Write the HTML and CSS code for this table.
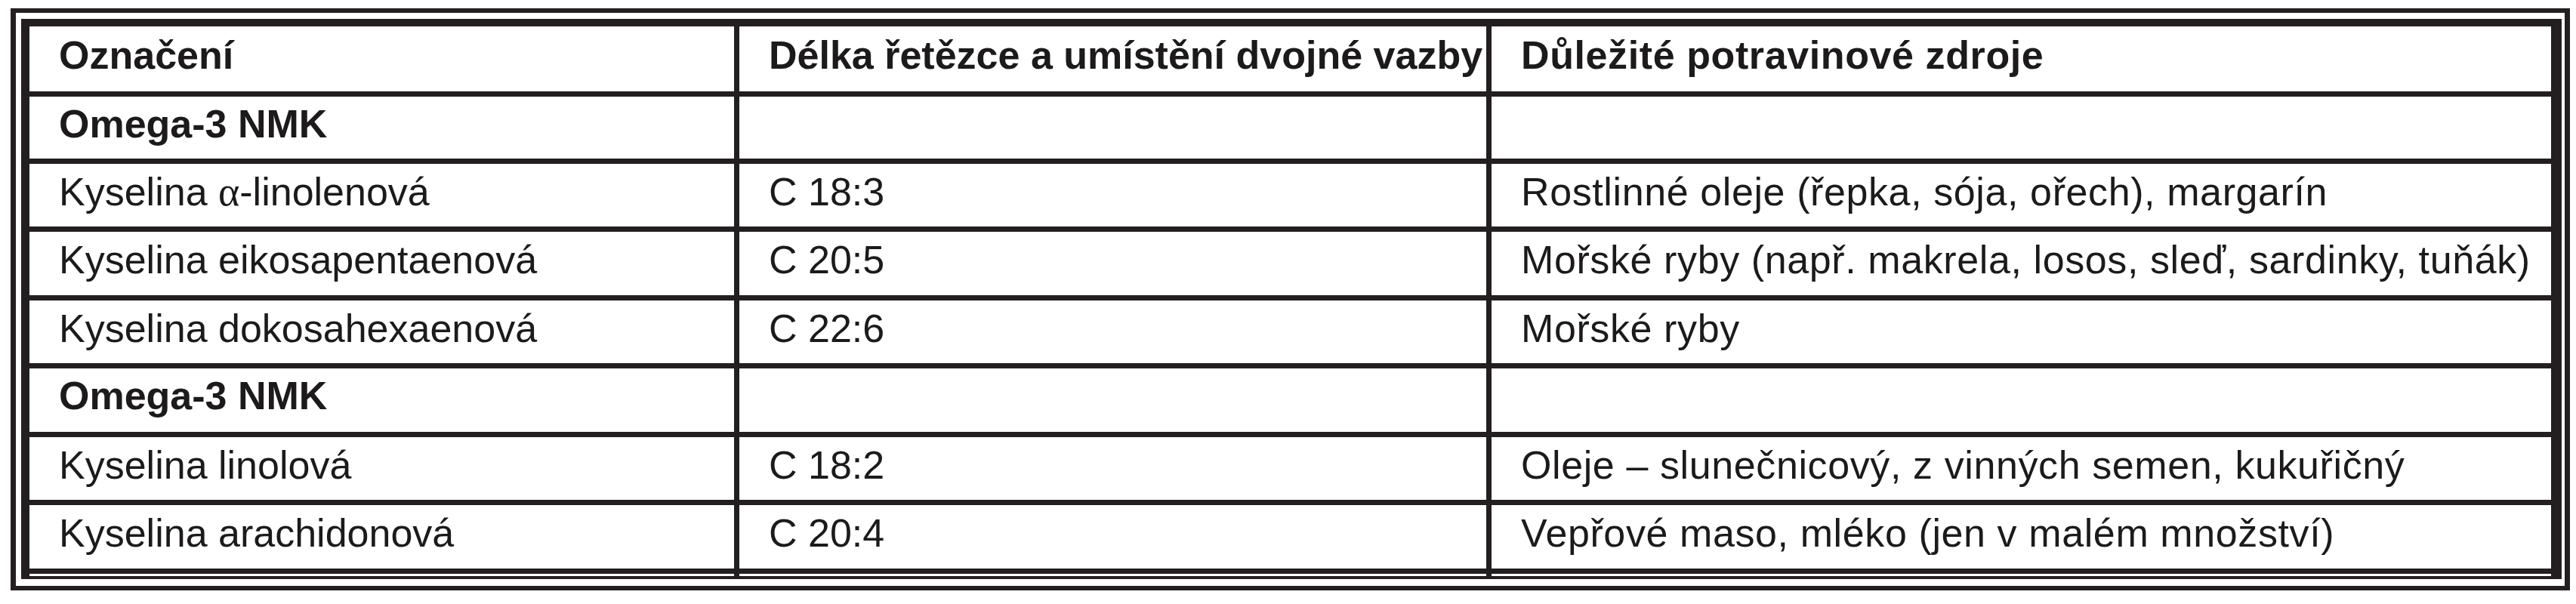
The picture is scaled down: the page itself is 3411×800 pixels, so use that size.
FILE: index.html
```html
<!DOCTYPE html>
<html lang="cs">
<head>
<meta charset="utf-8">
<title>Omega NMK</title>
<link rel="stylesheet" href="styles.css">
</head>
<body>
<div class="frame-outer">
  <div class="frame-inner">
    <table class="fat-table">
      <colgroup>
        <col class="c1">
        <col class="c2">
        <col class="c3">
      </colgroup>
      <thead>
        <tr class="r-head">
          <th>Označení</th>
          <th>Délka řetězce a umístění dvojné vazby</th>
          <th class="src">Důležité potravinové zdroje</th>
        </tr>
      </thead>
      <tbody>
        <tr class="r-a">
          <td class="group">Omega-3 NMK</td>
          <td></td>
          <td></td>
        </tr>
        <tr class="r-b">
          <td>Kyselina <span class="greek">α</span>-linolenová</td>
          <td>C 18:3</td>
          <td class="src">Rostlinné oleje (řepka, sója, ořech), margarín</td>
        </tr>
        <tr class="r-c">
          <td>Kyselina eikosapentaenová</td>
          <td>C 20:5</td>
          <td class="src">Mořské ryby (např. makrela, losos, sleď, sardinky, tuňák)</td>
        </tr>
        <tr class="r-b">
          <td>Kyselina dokosahexaenová</td>
          <td>C 22:6</td>
          <td class="src">Mořské ryby</td>
        </tr>
        <tr class="r-c">
          <td class="group">Omega-3 NMK</td>
          <td></td>
          <td></td>
        </tr>
        <tr class="r-b">
          <td>Kyselina linolová</td>
          <td>C 18:2</td>
          <td class="src">Oleje – slunečnicový, z vinných semen, kukuřičný</td>
        </tr>
        <tr class="r-c">
          <td>Kyselina arachidonová</td>
          <td>C 20:4</td>
          <td class="src">Vepřové maso, mléko (jen v malém množství)</td>
        </tr>
      </tbody>
    </table>
  </div>
</div>
</body>
</html>
```

FILE: styles.css
```css
html, body {
  margin: 0;
  padding: 0;
  background: #ffffff;
}

body {
  font-family: "Liberation Sans", Arial, Helvetica, sans-serif;
  color: #1c1a1b;
}

.frame-outer {
  box-sizing: border-box;
  width: 3389px;
  margin: 11px 0 0 14px;
  border-style: solid;
  border-color: #231f20;
  border-width: 6px 7px 6px 7px;
  padding: 8px 4px 9px 7px;
}

.frame-inner {
  border: 4px solid #231f20;
  padding-bottom: 3px;
  background-color: #ffffff;
  background-image: linear-gradient(to right,
    #231f20 0, #231f20 7px,
    transparent 7px, transparent 940px,
    #231f20 940px, #231f20 947px,
    transparent 947px, transparent 1936px,
    #231f20 1936px, #231f20 1943px,
    transparent 1943px, transparent 3346px,
    #231f20 3346px, #231f20 3357px);
  background-repeat: no-repeat;
}

.fat-table {
  width: 3357px;
  table-layout: fixed;
  border-collapse: separate;
  border-spacing: 0;
  background: #ffffff;
}

.c1 { width: 947px; }
.c2 { width: 996px; }
.c3 { width: 1414px; }

.fat-table th,
.fat-table td {
  box-sizing: content-box;
  background: #ffffff;
  border-style: solid;
  border-color: #231f20;
  border-width: 0 7px 7px 0;
  padding: 7px 0 0 39px;
  vertical-align: top;
  text-align: left;
  font-size: 52px;
  line-height: 60px;
  white-space: nowrap;
  overflow: hidden;
}

.fat-table th:first-child,
.fat-table td:first-child {
  border-left-width: 7px;
}

.fat-table th:last-child,
.fat-table td:last-child {
  border-right-width: 11px;
}

.fat-table th {
  font-weight: bold;
  border-top-width: 6px;
  padding-top: 8px;
}

.fat-table td.group {
  font-weight: bold;
  padding-top: 6px;
}

.fat-table .src {
  letter-spacing: 0.6px;
}

.r-head th { height: 78px; }
.r-a td { height: 75px; }
.r-b td { height: 76px; }
.r-c td { height: 77px; }

.greek {
  font-family: "Liberation Serif", "DejaVu Serif", serif;
  font-size: 54px;
}
```
